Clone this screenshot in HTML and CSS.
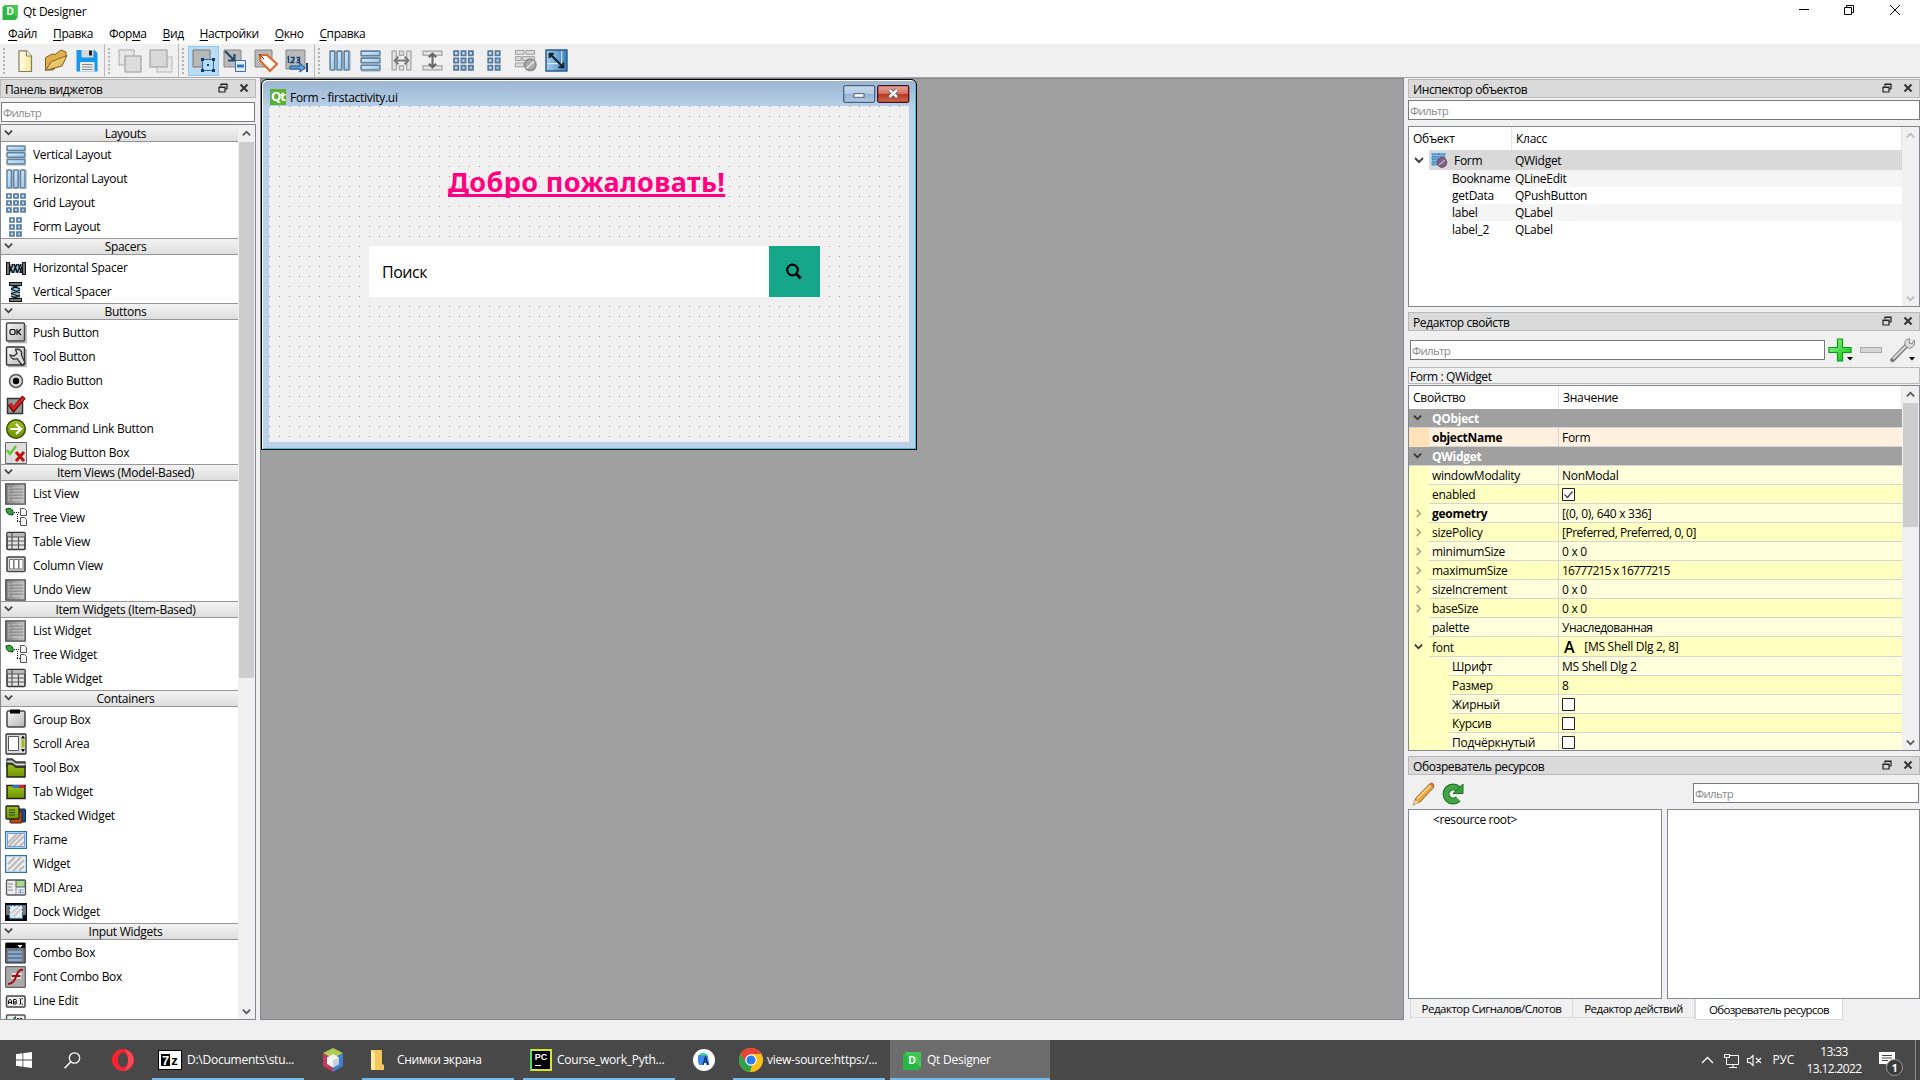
FILE: index.html
```html
<!DOCTYPE html>
<html lang="ru">
<head>
<meta charset="utf-8">
<title>Qt Designer</title>
<link rel="stylesheet" href="styles.css">
</head>
<body>
<svg class="defs" aria-hidden="true">
  <defs>
    <linearGradient id="blue" x1="0" y1="0" x2="1" y2="1"><stop offset="0" stop-color="#dcf0ff"/><stop offset="1" stop-color="#8fc4ea"/></linearGradient>
    <linearGradient id="grey" x1="0" y1="0" x2="1" y2="1"><stop offset="0" stop-color="#fafafa"/><stop offset="1" stop-color="#b4b4b4"/></linearGradient>
    <linearGradient id="dgrey" x1="0" y1="0" x2="1" y2="0"><stop offset="0" stop-color="#858585"/><stop offset="1" stop-color="#c4c4c4"/></linearGradient>
    <linearGradient id="olive" x1="0" y1="0" x2="0" y2="1"><stop offset="0" stop-color="#9dbf22"/><stop offset="1" stop-color="#6f9400"/></linearGradient>
    <linearGradient id="gold" x1="0" y1="0" x2="1" y2="1"><stop offset="0" stop-color="#ffe9a0"/><stop offset="1" stop-color="#d9a53a"/></linearGradient>
    <linearGradient id="green" x1="0" y1="0" x2="1" y2="1"><stop offset="0" stop-color="#9af59a"/><stop offset="1" stop-color="#00c400"/></linearGradient>
    <linearGradient id="navy" x1="0" y1="0" x2="1" y2="0"><stop offset="0" stop-color="#a9d0ee"/><stop offset="1" stop-color="#3d7fb8"/></linearGradient>
    <linearGradient id="gold2" x1="0" y1="0" x2="1" y2="0"><stop offset="0" stop-color="#fffef0"/><stop offset="1" stop-color="#f8e795"/></linearGradient>
  </defs>
  <symbol id="vbox" viewBox="0 0 22 22"><path d="M2 7.700h19M2 14.400h19M2 21.200h19" stroke="#b8bec4"/><g fill="url(#blue)" stroke="#64809c" stroke-width="1.500"><rect x="2" y="2" width="18" height="4.500" rx=".6"/><rect x="2" y="8.700" width="18" height="4.500" rx=".6"/><rect x="2" y="15.500" width="18" height="4.500" rx=".6"/></g></symbol>
  <symbol id="hbox" viewBox="0 0 22 22"><path d="M7.700 2v19M14.400 2v19M21.200 2v19" stroke="#b8bec4"/><g fill="url(#blue)" stroke="#64809c" stroke-width="1.500"><rect x="2" y="2" width="4.500" height="18" rx=".6"/><rect x="8.700" y="2" width="4.500" height="18" rx=".6"/><rect x="15.500" y="2" width="4.500" height="18" rx=".6"/></g></symbol>
  <symbol id="grid" viewBox="0 0 22 22"><g fill="url(#blue)" stroke="#56789a" stroke-width="1.700"><path d="M2 2h4v4H2zM9 2h4v4H9zM16 2h4v4h-4zM2 9h4v4H2zM9 9h4v4H9zM16 9h4v4h-4zM2 16h4v4H2zM9 16h4v4H9zM16 16h4v4h-4z"/></g></symbol>
  <symbol id="form" viewBox="0 0 22 22"><g fill="url(#blue)" stroke="#56789a" stroke-width="1.700"><path d="M5 2h4v4H5zM12 2h4v4h-4zM5 9h4v4H5zM12 9h4v4h-4zM5 16h4v4H5zM12 16h4v4h-4z"/></g></symbol>
  <symbol id="hspacer" viewBox="0 0 22 22"><path d="M4 7h14v9H4z" fill="#8fb3c8"/><path d="M4 16l4-9M8 16l4-9M12 16l4-9M15 16l3-9M4 8l4 8M9 7l3 8M13 7l4 9" stroke="#111" stroke-width="1.300"/><g fill="#777" stroke="#111"><rect x="1.500" y="5.500" width="3" height="12"/><rect x="17.500" y="5.500" width="3" height="12"/></g></symbol>
  <symbol id="vspacer" viewBox="0 0 22 22"><path d="M6 4h9v14H6z" fill="#8fc0d8"/><path d="M6 4l9 4M6 8l9 4M6 12l9 4M6 15l9 3M14 4l-8 4M15 9l-9 4M15 14l-8 4" stroke="#111" stroke-width="1.300"/><g fill="#777" stroke="#111"><rect x="4.500" y="1.500" width="12" height="3"/><rect x="4.500" y="17.500" width="12" height="3"/></g></symbol>
  <symbol id="push" viewBox="0 0 22 22"><path d="M3 20.500h18V3" fill="none" stroke="#aaa" stroke-width="1.500"/><rect x="1.500" y="1" width="18" height="18" rx="1" fill="url(#grey)" stroke="#444" stroke-width="1.400"/><path d="M6 7.500h3l1 1v3l-1 1H6l-1-1v-3zM12 7v6M16 7l-3 3 3 3" fill="none" stroke="#111" stroke-width="1.200"/></symbol>
  <symbol id="tool" viewBox="0 0 22 22"><path d="M3 20.500h18V3" fill="none" stroke="#aaa" stroke-width="1.500"/><rect x="1.500" y="1" width="18" height="18" rx="1" fill="url(#grey)" stroke="#333" stroke-width="1.400"/><path d="M10.500 3.500c4-1 7 1 6 5.500l3.500 8-3 2-5-6.500c-3 1.500-6.500 0-7-3.500l4 1 3-2.500z" fill="#ddd" stroke="#333" stroke-width="1.300"/></symbol>
  <symbol id="radio" viewBox="0 0 22 22"><circle cx="11" cy="11" r="6.500" fill="#d8d8d8" stroke="#555" stroke-width="1.500"/><circle cx="11" cy="11" r="3.200" fill="#000"/></symbol>
  <symbol id="check" viewBox="0 0 22 22"><rect x="2.500" y="4.500" width="15" height="15" fill="#999" stroke="#333" stroke-width="1.500"/><path d="M4.500 10l4 5.500L19 3" fill="none" stroke="#5a0d0d" stroke-width="4.500"/><path d="M5 10l3.500 4.500L18.500 4" fill="none" stroke="#df2020" stroke-width="2.800"/></symbol>
  <symbol id="cmd" viewBox="0 0 22 22"><circle cx="11" cy="11" r="9.300" fill="url(#olive)" stroke="#394e08" stroke-width="1.500"/><path d="M5.500 11H15M11 6l5 5-5 5" fill="none" stroke="#fff" stroke-width="2.200"/></symbol>
  <symbol id="dlg" viewBox="0 0 22 22"><path d="M.5.5h21v21H.5z" fill="#ddd" stroke="#666"/><path d="M2 8l3 4 6-8" fill="none" stroke="#65c433" stroke-width="2.400"/><path d="M11 10l8 9M19 10l-8 9" stroke="#bd1111" stroke-width="3"/></symbol>
  <symbol id="list" viewBox="0 0 22 22"><path d="M.8.8h19.400v20.400H.8z" fill="url(#dgrey)" stroke="#4c4c4c" stroke-width="1.300"/><path d="M3 5h2M3 8h2M3 11h2M3 14h2M3 17h2M7 5h11M7 8h11M7 11h11M7 14h11M7 17h11" stroke="#d4d4d4" stroke-width=".9"/><path d="M7 6h11M7 9h11M7 12h11M7 15h11" stroke="#777" stroke-width=".8"/></symbol>
  <symbol id="tree" viewBox="0 0 22 22"><path d="M1 2c4-2 8 0 7 6C3 8 1 6 1 2z" fill="#36a33f" stroke="#123d16"/><path d="M9 5.500h6M12.500 7v8M12 14.500h3" fill="none" stroke="#111" stroke-dasharray="1 1"/><g fill="#f5f5f5" stroke="#555"><path d="M15.500 1.500h4l2 2v5h-6zM15.500 10.500h4l2 2v6h-6z"/></g></symbol>
  <symbol id="table" viewBox="0 0 22 22"><rect x="2" y="1.500" width="18" height="17" rx="1" fill="#e4e4e4" stroke="#333" stroke-width="1.600"/><path d="M2.500 2h17v4h-17z" fill="#bbb"/><path d="M2 6h18M2 10h18M2 14h18M7 2v17M13.500 6v13" stroke="#555" stroke-width="1.200"/></symbol>
  <symbol id="column" viewBox="0 0 22 22"><rect x="2" y="2" width="18" height="14.500" rx="1" fill="#ddd" stroke="#444" stroke-width="1.600"/><path d="M4.500 4.500h4v9.500h-4zM9 4.500h4.500V14H9zM14 4.500h4V14h-4z" fill="#fff" stroke="#777"/></symbol>
  <symbol id="group" viewBox="0 0 22 22"><rect x="2" y="2" width="18" height="16" rx="1.500" fill="url(#grey)" stroke="#444" stroke-width="1.500"/><path d="M5 .5h10v4H5z" fill="#000"/></symbol>
  <symbol id="scroll" viewBox="0 0 22 22"><rect x="1" y="1" width="20" height="20" rx="1" fill="#ddd" stroke="#333" stroke-width="1.300"/><path d="M3.500 3.500h10v14h-10z" fill="#fff" stroke="#555"/><path d="M16.500 6.500h3v8h-3z" fill="#a0c000"/><path d="M16 5.500l2-3 2 3zM16 16l2 3 2-3z"/></symbol>
  <symbol id="toolbox" viewBox="0 0 22 22"><path d="M2 2h5l4 3h9v5H2z" fill="#888" stroke="#333" stroke-width="1.300"/><path d="M2 4.500h5l4 3h9" fill="none" stroke="#ddd"/><path d="M2 7h5l4 3h9v10H2z" fill="url(#olive)" stroke="#222" stroke-width="1.500"/></symbol>
  <symbol id="tabw" viewBox="0 0 22 22"><path d="M2 4.500h18v13H2z" fill="url(#olive)" stroke="#222" stroke-width="1.500"/><path d="M8 4h6v3H8z" fill="#2676d8"/><path d="M14 4h5v3h-5z" fill="#db1c1c"/></symbol>
  <symbol id="stack" viewBox="0 0 22 22"><rect x="9" y="4" width="11.500" height="13" rx="1" fill="#174fae" stroke="#122"/><rect x="5" y="6" width="12" height="12" rx="1" fill="#bd4c13" stroke="#321"/><rect x="1" y="1" width="13" height="13" rx="1" fill="url(#olive)" stroke="#222" stroke-width="1.300"/><path d="M4 5h6M4 7.500h6M4 10h6" stroke="#243"/></symbol>
  <symbol id="frame" viewBox="0 0 22 22"><path d="M.6 2.600h20.800v16.800H.6z" fill="#eee" stroke="#2674c4" stroke-width="1.200"/><path d="M3 14l9-9M3 18L16 5M8 18L19 7M14 18l5-5" stroke="#bbb" stroke-width="2"/><path d="M2.500 4.500h17v13h-17z" fill="none" stroke="#6ea2d8"/></symbol>
  <symbol id="widget" viewBox="0 0 22 22"><path d="M.6 2.600h20.800v16.800H.6z" fill="#eee" stroke="#2674c4" stroke-width="1.200"/><path d="M3 11l7-7M3 17L16 4M8 18L19 7M14 18l5-5" stroke="#bbb" stroke-width="2.300"/></symbol>
  <symbol id="mdi" viewBox="0 0 22 22"><rect x="1.500" y="3" width="19" height="15" rx="1" fill="#eee" stroke="#555" stroke-width="1.300"/><path d="M11 3.500h9V10h-9z" fill="#afda83" stroke="#567"/><path d="M11 10v8M3 7h5M3 10h4M3 13h5" stroke="#888"/><path d="M13 13h6M13 15.500h6M15.500 12v5" stroke="#7eaede"/></symbol>
  <symbol id="dock" viewBox="0 0 22 22"><path d="M0 2h22v18H0z" fill="#000"/><path d="M1 4h20v10H1z" fill="#777"/><path d="M4.500 4.500h13v13h-13z" fill="#eee" stroke="#2674c4" stroke-width="1.300" stroke-dasharray="2.500 1.500"/><path d="M6 13l7-7M8 16l8-8" stroke="#ccc" stroke-width="2"/></symbol>
  <symbol id="combo" viewBox="0 0 22 22"><path d="M.7 1h19.500v20H.7z" fill="#777" stroke="#222"/><path d="M1 1h19v5H1z"/><path d="M12.500 3h5l-2.500 3z" fill="#fff"/><path d="M3 10h14M3 14h14M3 18h14" stroke="#74acef" stroke-width="2"/></symbol>
  <symbol id="fontcombo" viewBox="0 0 22 22"><path d="M.7.700h19.600v20.600H.7z" fill="#aaa" stroke="#444"/><path d="M7 8h10M6 12h10" stroke="#ddd" stroke-width="2"/><path d="M18 4c-8-2-5 14-15 14M7 10h8" fill="none" stroke="#a40d12" stroke-width="2"/></symbol>
  <symbol id="lineedit" viewBox="0 0 22 22"><rect x="1.500" y="6" width="18.500" height="11" rx="1" fill="#eee" stroke="#444" stroke-width="1.500"/><path d="M3.500 14v-3l1-1.500h1l1 1.500v3M3.500 12.500h3M8.500 14V9.500H11l.5 1-.5 1.500h-2.500M11 12l.5 1-.5 1H8.500M14.500 8.500l1 .5v5l-1 .5M18 8.500L16.500 9M18 14.500l-1.500-.5" fill="none" stroke="#111"/></symbol>
  <symbol id="textedit" viewBox="0 0 22 22"><rect x="1.500" y="1" width="18.500" height="18" rx="1" fill="#eee" stroke="#555" stroke-width="1.500"/><path d="M8 6l2-2v3" fill="none" stroke="#2a7d32" stroke-width="2"/><path d="M12 5h6" stroke="#111" stroke-width="2" stroke-dasharray="2 1"/></symbol>

  <symbol id="new" viewBox="0 0 24 24"><path d="M6 1.800h7.500l5 5.200v15.500H6z" fill="url(#gold2)" stroke="#8a7c50" stroke-width="1.200"/><path d="M13.500 1.800V7h5" fill="#fff" stroke="#8a7c50"/></symbol>
  <symbol id="open" viewBox="0 0 24 24"><path d="M1.500 21V8.500L8 5l3 .5 6-4.500 5 2v5L9 21z" fill="#e0b04a" stroke="#806020"/><path d="M1.500 21.500l6-9L23 6.500l-5 10.500z" fill="url(#gold)" stroke="#806020"/></symbol>
  <symbol id="save" viewBox="0 0 24 24"><path d="M1.500 1h18L22.500 4v18.500h-21z" fill="#1497ef"/><path d="M6.500 1h12v7.500h-12z" fill="#d9d9d9"/><path d="M14 1.500h3v5h-3z" fill="#222"/><path d="M5 13h14.500v9.500H5z" fill="#ececec"/><path d="M7 15.500h10.500M7 18h10.500M7 20.500h10.500" stroke="#888"/></symbol>
  <symbol id="back" viewBox="0 0 24 24"><rect x="1" y="1" width="15" height="15" fill="#e7e7e7" stroke="#aaa"/><rect x="7" y="7" width="16" height="16" fill="#ddd" stroke="#aaa" stroke-width="1.300"/></symbol>
  <symbol id="front" viewBox="0 0 24 24"><rect x="8" y="8" width="15" height="15" fill="#e7e7e7" stroke="#bbb"/><rect x="1" y="1" width="17" height="17" fill="#d8d8d8" stroke="#aaa" stroke-width="1.300"/></symbol>
  <symbol id="editw" viewBox="0 0 24 24"><path d="M1 1h17v17H1z" fill="#b9b9b9" stroke="#777"/><path d="M10.500 10.500h11v11h-11z" fill="#b8daff" stroke="#1b64b4"/><path d="M9 9h3v3H9zM20 9h3v3h-3zM9 20h3v3H9zM20 20h3v3h-3zM15 15h2v2h-2z" fill="#143a66"/></symbol>
  <symbol id="edits" viewBox="0 0 24 24"><path d="M1 1h17v17H1z" fill="#b9b9b9" stroke="#888"/><path d="M2 2l9 9M11.500 5v6.500H5" fill="none" stroke="#234a66" stroke-width="2.200"/><path d="M12.500 11.500h10v11h-10z" fill="#e4efff" stroke="#3c6fae"/><path d="M14 17h7" stroke="#3372be" stroke-width="3"/></symbol>
  <symbol id="editb" viewBox="0 0 24 24"><path d="M1 1h17v17H1z" fill="#b9b9b9" stroke="#888"/><path d="M6 6h7L23 15l-7 7L6.500 12z" fill="#fff" stroke="#dd6724" stroke-width="2.200"/><path d="M5 5l5 5" stroke="#333"/></symbol>
  <symbol id="editt" viewBox="0 0 24 24"><path d="M1 1h19v19H1z" fill="#bababa" stroke="#888"/><path d="M2.500 9l1-1v6M6 8.500h3v2L6 13.500h3.500M11.500 8.500h3v5h-3M12 11h2.500" fill="none" stroke="#173f70" stroke-width="1.400"/><path d="M5 17h10v-3l5 5-5 4v-3H5z" fill="#58a4e8" stroke="#174d82"/><path d="M22 14v9" stroke="#174d82" stroke-width="2"/></symbol>
  <symbol id="hsplit" viewBox="0 0 22 22"><g fill="#e4e4e4" stroke="#aaa" stroke-width="1.300"><rect x="2" y="2" width="4" height="18"/><rect x="16" y="2" width="4" height="18"/><path d="M9 2h4v4H9zM9 16h4v4H9z"/></g><path d="M5 11h12M8 7.500L4.500 11 8 14.500M14 7.500l3.500 3.500-3.500 3.500" fill="none" stroke="#777" stroke-width="2"/></symbol>
  <symbol id="vsplit" viewBox="0 0 22 22"><g fill="#e4e4e4" stroke="#aaa" stroke-width="1.300"><rect x="2" y="2" width="18" height="4"/><rect x="2" y="16" width="18" height="4"/></g><path d="M11 5v12M7.500 8L11 4.500 14.500 8M7.500 14l3.500 3.500 3.500-3.500" fill="none" stroke="#666" stroke-width="2"/></symbol>
  <symbol id="break" viewBox="0 0 24 24"><path d="M1.500 1.500h9v4h-9zM12.500 1.500h9v4h-9zM1.500 8h6v4h-6zM9 8h12.500v4H9zM1.500 14.500h9v4h-9z" fill="#ddd" stroke="#999"/><circle cx="17" cy="16.500" r="6" fill="#aaa" stroke="#888" stroke-width="1.500"/><path d="M13 20l8-7" stroke="#ddd" stroke-width="2"/></symbol>
  <symbol id="adjust" viewBox="0 0 22 22"><path d="M1 1h20v20H1z" fill="url(#navy)" stroke="#25598e" stroke-width="1.400"/><path d="M2 14h14V2" fill="none" stroke="#d6ecfa"/><path d="M5 5l12 12M4.500 8.500v-4h4M17.500 13v4.500H13" fill="none" stroke="#14242e" stroke-width="2"/></symbol>
  <symbol id="broken" viewBox="0 0 17 17"><path d="M1 1h6.500v3H1zM8.500 1H14v3H8.500zM1 5.500h4v3H1zM6 5.500h8v3H6zM1 10h6v4H1z" fill="#5caee9" stroke="#3b7fb5" stroke-width=".8"/><circle cx="11" cy="11.500" r="4.800" fill="#7b6286" stroke="#803a52"/><path d="M8 14l6-5" stroke="#dcdcf2"/></symbol>

  <symbol id="down" viewBox="0 0 10 10"><path d="M1 3l4 4 4-4" fill="none" stroke="currentColor" stroke-width="2"/></symbol>
  <symbol id="up" viewBox="0 0 10 10"><path d="M1 7l4-4 4 4" fill="none" stroke="currentColor" stroke-width="2"/></symbol>
  <symbol id="right" viewBox="0 0 10 10"><path d="M3 1l4 4-4 4" fill="none" stroke="currentColor" stroke-width="1.800"/></symbol>
  <symbol id="float" viewBox="0 0 10 10"><path d="M3 3V1h6v5H7M3 1.500h6" fill="none" stroke="#222" stroke-width="1.200"/><path d="M1 4h6v5H1zM1 4.500h6" fill="none" stroke="#222" stroke-width="1.200"/></symbol>
  <symbol id="close" viewBox="0 0 10 10"><path d="M1.500 1.500l7 7M8.500 1.500l-7 7" stroke="#333" stroke-width="2"/></symbol>
  <symbol id="qtd" viewBox="0 0 20 20"><path d="M3 0h17v17l-3 3H0V3z" fill="#2bb544"/><path d="M3 0h17v17L3 3z" fill="#41c853"/></symbol>
</svg>

<div class="titlebar">
  <span class="qtlogo"><svg preserveAspectRatio="none"><use href="#qtd"/></svg><b>D</b></span>
  <span class="apptitle">Qt Designer</span>
  <svg class="winctl" width="102" height="12" viewBox="0 0 102 12"><g fill="none" stroke="#000"><path d="M0 5.500h10M45.500 3.500h7v7h-7zM47.500 3.500v-2h7v7h-2M91 1l10 10M101 1L91 11"/></g></svg>
</div>
<div class="menubar"><span><u>Ф</u>айл</span><span><u>П</u>равка</span><span>Фор<u>м</u>а</span><span><u>В</u>ид</span><span><u>Н</u>астройки</span><span><u>О</u>кно</span><span><u>С</u>правка</span></div>
<div class="toolbar">
  <div class="tgroup g1"><i class="handle"></i><span class="tb"><svg><use href="#new"/></svg></span><span class="tb"><svg><use href="#open"/></svg></span><span class="tb"><svg><use href="#save"/></svg></span></div>
  <div class="tgroup g2"><i class="handle"></i><span class="tb"><svg><use href="#back"/></svg></span><span class="tb"><svg><use href="#front"/></svg></span></div>
  <div class="tgroup g3"><i class="handle"></i><span class="tb on"><svg><use href="#editw"/></svg></span><span class="tb"><svg><use href="#edits"/></svg></span><span class="tb"><svg><use href="#editb"/></svg></span><span class="tb"><svg><use href="#editt"/></svg></span></div>
  <div class="tgroup g4"><i class="handle"></i><span class="tb"><svg><use href="#hbox"/></svg></span><span class="tb"><svg><use href="#vbox"/></svg></span><span class="tb"><svg><use href="#hsplit"/></svg></span><span class="tb"><svg><use href="#vsplit"/></svg></span><span class="tb"><svg><use href="#grid"/></svg></span><span class="tb"><svg><use href="#form"/></svg></span><span class="tb"><svg><use href="#break"/></svg></span><span class="tb"><svg><use href="#adjust"/></svg></span></div>
</div>

<main class="work">
  <aside class="left">
    <div class="docktitle"><span>Панель виджетов</span><svg><use href="#float"/></svg><svg><use href="#close"/></svg></div>
    <div class="filter">Фильтр</div>
    <div class="wbox">
      <div class="wlist">
        <h3><svg><use href="#down"/></svg>Layouts</h3>
        <p><svg><use href="#vbox"/></svg>Vertical Layout</p>
        <p><svg><use href="#hbox"/></svg>Horizontal Layout</p>
        <p><svg><use href="#grid"/></svg>Grid Layout</p>
        <p><svg><use href="#form"/></svg>Form Layout</p>
        <h3><svg><use href="#down"/></svg>Spacers</h3>
        <p><svg><use href="#hspacer"/></svg>Horizontal Spacer</p>
        <p><svg><use href="#vspacer"/></svg>Vertical Spacer</p>
        <h3><svg><use href="#down"/></svg>Buttons</h3>
        <p><svg><use href="#push"/></svg>Push Button</p>
        <p><svg><use href="#tool"/></svg>Tool Button</p>
        <p><svg><use href="#radio"/></svg>Radio Button</p>
        <p><svg><use href="#check"/></svg>Check Box</p>
        <p><svg><use href="#cmd"/></svg>Command Link Button</p>
        <p><svg><use href="#dlg"/></svg>Dialog Button Box</p>
        <h3><svg><use href="#down"/></svg>Item Views (Model-Based)</h3>
        <p><svg><use href="#list"/></svg>List View</p>
        <p><svg><use href="#tree"/></svg>Tree View</p>
        <p><svg><use href="#table"/></svg>Table View</p>
        <p><svg><use href="#column"/></svg>Column View</p>
        <p><svg><use href="#list"/></svg>Undo View</p>
        <h3><svg><use href="#down"/></svg>Item Widgets (Item-Based)</h3>
        <p><svg><use href="#list"/></svg>List Widget</p>
        <p><svg><use href="#tree"/></svg>Tree Widget</p>
        <p><svg><use href="#table"/></svg>Table Widget</p>
        <h3><svg><use href="#down"/></svg>Containers</h3>
        <p><svg><use href="#group"/></svg>Group Box</p>
        <p><svg><use href="#scroll"/></svg>Scroll Area</p>
        <p><svg><use href="#toolbox"/></svg>Tool Box</p>
        <p><svg><use href="#tabw"/></svg>Tab Widget</p>
        <p><svg><use href="#stack"/></svg>Stacked Widget</p>
        <p><svg><use href="#frame"/></svg>Frame</p>
        <p><svg><use href="#widget"/></svg>Widget</p>
        <p><svg><use href="#mdi"/></svg>MDI Area</p>
        <p><svg><use href="#dock"/></svg>Dock Widget</p>
        <h3><svg><use href="#down"/></svg>Input Widgets</h3>
        <p><svg><use href="#combo"/></svg>Combo Box</p>
        <p><svg><use href="#fontcombo"/></svg>Font Combo Box</p>
        <p><svg><use href="#lineedit"/></svg>Line Edit</p>
        <p><svg><use href="#textedit"/></svg></p>
      </div>
      <div class="sbar"><svg><use href="#up"/></svg><i class="thumb t1"></i><svg class="end"><use href="#down"/></svg></div>
    </div>
  </aside>

  <section class="mdi">
    <div class="win">
      <div class="wintitle">
        <b class="qt">Qt</b><span>Form - firstactivity.ui</span>
        <svg width="67" height="18" viewBox="0 0 67 18">
          <defs><linearGradient id="bm" x1="0" y1="0" x2="0" y2="1"><stop offset="0" stop-color="#c7daed"/><stop offset=".48" stop-color="#b4cbe4"/><stop offset=".5" stop-color="#93b2d2"/><stop offset="1" stop-color="#b3cce6"/></linearGradient>
          <linearGradient id="bc" x1="0" y1="0" x2="0" y2="1"><stop offset="0" stop-color="#e8a598"/><stop offset=".48" stop-color="#d6705f"/><stop offset=".5" stop-color="#b93520"/><stop offset="1" stop-color="#cf6c50"/></linearGradient></defs>
          <rect x=".7" y=".7" width="31" height="16.600" rx="1.500" fill="url(#bm)" stroke="#4a6380" stroke-width="1.300"/><rect x="11" y="8.700" width="10" height="3.600" fill="#fff" stroke="#555e6e"/>
          <rect x="34.700" y=".7" width="31" height="16.600" rx="1.500" fill="url(#bc)" stroke="#48101c" stroke-width="1.300"/><path d="M46.500 5l7.500 7M54 5l-7.500 7" stroke="#515667" stroke-width="4.200"/><path d="M46.500 5l7.500 7M54 5l-7.500 7" stroke="#fff" stroke-width="2.400"/>
        </svg>
      </div>
      <div class="canvas">
        <div class="welcome">Добро пожаловать!</div>
        <div class="search"><span>Поиск</span><b><svg width="18" height="18" viewBox="0 0 18 18"><circle cx="7.500" cy="7" r="5.300" fill="none" stroke="#000" stroke-width="2.200"/><path d="M11.200 10.800l4.500 4.700" stroke="#000" stroke-width="2.800"/></svg></b></div>
      </div>
    </div>
  </section>

  <aside class="right">
    <div class="docktitle"><span>Инспектор объектов</span><svg><use href="#float"/></svg><svg><use href="#close"/></svg></div>
    <div class="filter f2">Фильтр</div>
    <div class="inspector">
      <div class="tree">
        <div class="hdr"><span>Объект</span><span>Класс</span></div>
        <div class="orow root"><svg class="exp"><use href="#down"/></svg><span><svg><use href="#broken"/></svg>Form</span><em>QWidget</em></div>
        <div class="orow alt"><span>Bookname</span><em>QLineEdit</em></div>
        <div class="orow"><span>getData</span><em>QPushButton</em></div>
        <div class="orow alt"><span>label</span><em>QLabel</em></div>
        <div class="orow"><span>label_2</span><em>QLabel</em></div>
      </div>
      <div class="sbar off"><svg><use href="#up"/></svg><svg class="end"><use href="#down"/></svg></div>
    </div>

    <div class="docktitle d2"><span>Редактор свойств</span><svg><use href="#float"/></svg><svg><use href="#close"/></svg></div>
    <div class="ptools">
      <div class="filter">Фильтр</div>
      <svg width="92" height="26" viewBox="0 0 92 26"><path d="M9.500 2h5v8.500H23v5h-8.500V24h-5v-8.500H1v-5h8.500z" fill="url(#green)" stroke="#0c9a16" stroke-width="1.200"/><path d="M19 20h6l-3 3.500z"/><rect x="32.500" y="10.500" width="21" height="5" fill="#d6d6d8" stroke="#aaa"/><path d="M64.500 23L80 7" stroke="#777" stroke-width="4.500" stroke-linecap="round"/><path d="M65 22L79 8" stroke="#ddd" stroke-width="2"/><path d="M77 8c-1-4 2-7 5-6l-1 4 3 1 2-4c2 5-2 9-6 8z" fill="#ddd" stroke="#888"/><path d="M81 20h6l-3 3.500z"/></svg>
    </div>
    <div class="objlabel">Form : QWidget</div>
    <div class="props">
      <div class="ptable">
        <div class="hdr"><span>Свойство</span><span>Значение</span></div>
        <div class="sec"><svg><use href="#down"/></svg>QObject</div>
        <div class="prow orange bold"><i></i><span>objectName</span><em>Form</em></div>
        <div class="sec"><svg><use href="#down"/></svg>QWidget</div>
        <div class="prow"><i></i><span>windowModality</span><em>NonModal</em></div>
        <div class="prow alt"><i></i><span>enabled</span><em><svg class="cb" viewBox="0 0 13 13"><path d="M.5.5h12v12H.5z" fill="#fff" stroke="#222"/><path d="M2.500 6.500l3 3 5-6" fill="none" stroke="#444" stroke-width="1.300"/></svg></em></div>
        <div class="prow bold"><i><svg><use href="#right"/></svg></i><span>geometry</span><em>[(0, 0), 640 x 336]</em></div>
        <div class="prow alt"><i><svg><use href="#right"/></svg></i><span>sizePolicy</span><em class="tight">[Preferred, Preferred, 0, 0]</em></div>
        <div class="prow"><i><svg><use href="#right"/></svg></i><span>minimumSize</span><em>0 x 0</em></div>
        <div class="prow alt"><i><svg><use href="#right"/></svg></i><span>maximumSize</span><em class="tighter">16777215 x 16777215</em></div>
        <div class="prow"><i><svg><use href="#right"/></svg></i><span>sizeIncrement</span><em>0 x 0</em></div>
        <div class="prow alt"><i><svg><use href="#right"/></svg></i><span>baseSize</span><em>0 x 0</em></div>
        <div class="prow"><i></i><span>palette</span><em class="tight">Унаследованная</em></div>
        <div class="prow alt font"><i class="dark"><svg><use href="#down"/></svg></i><span>font</span><em><b>A</b>[MS Shell Dlg 2, 8]</em></div>
        <div class="prow sub"><i></i><span>Шрифт</span><em>MS Shell Dlg 2</em></div>
        <div class="prow alt sub"><i></i><span>Размер</span><em>8</em></div>
        <div class="prow sub"><i></i><span>Жирный</span><em><svg class="cb" viewBox="0 0 13 13"><path d="M.5.5h12v12H.5z" fill="#fff" stroke="#222"/></svg></em></div>
        <div class="prow alt sub"><i></i><span>Курсив</span><em><svg class="cb" viewBox="0 0 13 13"><path d="M.5.5h12v12H.5z" fill="#fff" stroke="#222"/></svg></em></div>
        <div class="prow sub"><i></i><span>Подчёркнутый</span><em><svg class="cb" viewBox="0 0 13 13"><path d="M.5.5h12v12H.5z" fill="#fff" stroke="#222"/></svg></em></div>
      </div>
      <div class="sbar"><svg><use href="#up"/></svg><i class="thumb t2"></i><svg class="end"><use href="#down"/></svg></div>
    </div>

    <div class="docktitle d3"><span>Обозреватель ресурсов</span><svg><use href="#float"/></svg><svg><use href="#close"/></svg></div>
    <div class="rtools">
      <svg width="54" height="24" viewBox="0 0 54 24"><path d="M1 23l3-7L18 1.500l4 3.500L8 20z" fill="#eda63c" stroke="#8b6231"/><path d="M5 17L18.500 3.500" stroke="#ffd98a" stroke-width="1.500"/><path d="M18 1.500l2-1.200L22.500 3 22 5z" fill="#d7604c"/><path d="M1 23l2-5 4 3z" fill="#e8d2a4"/><path d="M46 17a7 7 0 1 1 0-10" fill="none" stroke="#14721c" stroke-width="7"/><path d="M46 17a7 7 0 1 1 0-10" fill="none" stroke="#43a548" stroke-width="5"/><path d="M51 2v9.500H41z" fill="#3da045" stroke="#14721c"/></svg>
      <div class="filter">Фильтр</div>
    </div>
    <div class="rboxes"><div>&lt;resource root&gt;</div><div></div></div>
    <div class="tabs"><span>Редактор Сигналов/Слотов</span><span>Редактор действий</span><span class="sel">Обозреватель ресурсов</span></div>
  </aside>
</main>

<footer class="taskbar">
  <span class="ti w48"><svg width="16" height="16" viewBox="0 0 16 16"><path d="M0 2.200L6.500 1.300V7.600H0zM7.300 1.200L16 0v7.600H7.300zM0 8.400h6.500v6.300L0 13.800zM7.300 8.400H16V16l-8.700-1.200z" fill="#fff"/></svg></span>
  <span class="ti w48"><svg width="17" height="17" viewBox="0 0 17 17"><circle cx="10.500" cy="6" r="5.200" fill="none" stroke="#fff" stroke-width="1.300"/><path d="M6.800 9.800L.6 16.300" stroke="#fff" stroke-width="1.400"/></svg></span>
  <span class="ti w54"><svg width="24" height="24" viewBox="0 0 24 24"><path fill-rule="evenodd" d="M12 1a11 11 0 1 0 0 22 11 11 0 0 0 0-22zM12 4.500c3 0 5 3.400 5 7.500s-2 7.500-5 7.500S7 16.100 7 12s2-7.500 5-7.500z" fill="#fb2230"/><path d="M12 1c14 2 14 20 0 22 3-1 5-4 5-11S15 2 12 1z" fill="#fff" opacity=".18"/></svg></span>
  <span class="tk tk1"><b class="seven"><i>7</i><i>z</i></b>D:\Documents\stu...</span>
  <span class="ti w58"><svg width="22" height="26" viewBox="0 0 22 26"><path d="M11 1l10 5-10 6L1 6z" fill="#b2cb54"/><path d="M1 6l10 6v13L1 19z" fill="#c33a5c"/><path d="M21 6l-10 6v13l10-6z" fill="#3e82d2"/><path d="M11 7l6 3.500V17l-6 3.500L5 17v-6.500z" fill="#f2f5f7"/><path d="M11 13.500l6-3V17l-6 3.500z" fill="#cbd2d9"/></svg></span>
  <span class="tk tk2"><svg width="16" height="22" viewBox="0 0 16 22"><path d="M1 1h11v14l2 1v5H1z" fill="#f2c75c"/><path d="M1 1l4 2v18l-4-1z" fill="#ffe8a0"/></svg>Снимки экрана</span>
  <span class="tk tk3"><b class="pc">PC</b>Course_work_Pyth...</span>
  <span class="ti w58"><svg width="22" height="22" viewBox="0 0 22 22"><circle cx="11" cy="11" r="11" fill="#fff"/><path d="M5.500 6h9l2 10h-3l-2-6-1.500 6h-4z" fill="#4285f4"/><path d="M5 6.500h10V14H5z" fill="#4285f4"/><path d="M6 6c2-3 7-3 9 1z" fill="#3ddc84"/><path d="M10 16l2.500-8 2.500 8M11 13h3.500" fill="none" stroke="#07305f" stroke-width="1.200"/></svg></span>
  <span class="tk tk4"><svg width="24" height="24" viewBox="0 0 24 24"><circle cx="12" cy="12" r="12" fill="#fbc116"/><path d="M1.600 6A12 12 0 0 1 22.400 6H12l-5 9z" fill="#ea4335"/><path d="M1.600 6l6 9.500 5.400 2L11 24A12 12 0 0 1 1.600 6z" fill="#2ba24c"/><circle cx="12" cy="12" r="5.800" fill="#fff"/><circle cx="12" cy="12" r="4.600" fill="#2c7df0"/></svg>view-source:https:/...</span>
  <span class="tk tk5"><span class="qtlogo big"><svg><use href="#qtd"/></svg><b>D</b></span>Qt Designer</span>
  <span class="tray">
    <svg width="62" height="18" viewBox="0 0 62 18"><path d="M1 12l5.500-5.500L12 12" fill="none" stroke="#fff" stroke-width="1.300"/><path d="M29 4.500h8.500v9H27M23.500 3.500h5v3h-5zM25.500 7v6.500H28M32 14v2.500M28 16.500h8" fill="none" stroke="#fff"/><path d="M46.500 7.500h2.500l3-3v10l-3-3h-2.500zM55 7l5 5M60 7l-5 5" fill="none" stroke="#fff" stroke-width="1.100"/></svg>
    <span class="lang">РУС</span>
    <span class="clock">13:33<br>13.12.2022</span>
    <span class="notif"><svg width="16" height="16" viewBox="0 0 16 16"><path d="M0 0h16v12h-5v4l-4-4H0z" fill="#fff"/><path d="M3 3.500h10M3 6h10M3 8.500h6" stroke="#444"/></svg><b>1</b></span>
    <i class="peek"></i>
  </span>
</footer>
</body>
</html>
```
FILE: styles.css
```css
* { box-sizing: border-box; }
body { margin: 0; width: 1920px; height: 1080px; overflow: hidden; display: flex; flex-direction: column; background: #f0f0f0; color: #000; font: 12px/16px "Open Sans", "Noto Sans", sans-serif; letter-spacing: -0.28px; white-space: nowrap; }
h3, p { margin: 0; font-size: inherit; font-weight: 400; }
em, i { font-style: normal; }
svg { flex: none; display: block; }
.defs { position: absolute; width: 0; height: 0; }

.titlebar { height: 24px; background: #fff; display: flex; align-items: center; padding: 0 19px 0 2px; flex: none; }
.qtlogo { width: 16px; height: 15px; display: grid; place-items: center; }
.qtlogo svg, .qtlogo b { grid-area: 1 / 1; }
.qtlogo svg { width: 16px; height: 15px; }
.qtlogo b { font: bold 10px/14px "Liberation Sans", sans-serif; color: #fff; z-index: 1; letter-spacing: 0; }
.apptitle { margin-left: 5px; flex: 1; }
.winctl { margin-top: -4px; }
.menubar { height: 20px; background: #fff; display: flex; gap: 16px; padding: 2px 8px; flex: none; letter-spacing: -.42px; }
.menubar u { text-underline-offset: 2px; }

.toolbar { height: 34px; border-bottom: 1px solid #a8a8a8; display: flex; flex: none; background: #f0f0f0; }
.tgroup { display: flex; align-items: center; border-right: 1px solid #bdbdbd; padding: 1px 0 1px; }
.g1 { width: 105px; } .g2 { width: 74px; } .g3 { width: 136px; } .g4 { border: 0; }
.handle { width: 2px; height: 26px; margin: 0 4px 0 3px; background: repeating-linear-gradient(#b5b5b5 0 2px, transparent 2px 4px); }
.tb { width: 31px; height: 30px; display: grid; place-items: center; }
.tb svg { width: 24px; height: 24px; }
.g4 .tb svg { width: 23px; height: 23px; }
.tb.on { background: #bcdcf4; border: 1px solid #90c8f6; }

.work { height: 942px; flex: none; display: flex; }
.left { width: 256px; display: flex; flex-direction: column; padding-top: 1px; }
.docktitle { height: 19px; flex: none; background: #dadada; border: 1px solid #b9b9b9; display: flex; align-items: center; padding: 0 6px 0 4px; gap: 11px; }
.docktitle span { flex: 1; padding-top: 2px; letter-spacing: -.4px; }
.docktitle svg { width: 10px; height: 10px; margin-top: -1px; }
.filter { height: 20px; border: 1px solid #7a7a7a; background: #fff; color: #8b8b8b; padding: 2px 2px 0 1px; font-size: 11.5px; line-height: 16px; letter-spacing: -.7px; }
.left .filter { margin: 4px 1px 2px 1px; flex: none; }
.wbox { height: 896px; border: 1px solid #828790; display: flex; background: #fff; overflow: hidden; }
.wlist { flex: 1; }
.wlist h3 { height: 17px; line-height: 15px; text-align: center; background: linear-gradient(#f3f3f3, #dedede); border-top: 1px solid #969696; border-bottom: 1px solid #969696; display: flex; align-items: center; justify-content: center; }
.wlist h3:first-child { border-top-color: #eee; }
.wlist h3 svg { width: 9px; height: 9px; margin: -2px auto 0 3px; color: #444; }
.wlist h3::after { content: ""; width: 0; margin-right: auto; }
.wlist p { height: 24px; display: flex; align-items: center; padding: 2px 0 0 4px; gap: 6px; }
.wlist p svg { width: 22px; height: 22px; }
.sbar { width: 17px; background: #f0f0f0; display: flex; flex-direction: column; align-items: center; color: #555; padding: 4px 0 3px; flex: none; }
.sbar svg { width: 9px; height: 9px; }
.sbar .end { margin-top: auto; }
.off { color: #bbb; }
.thumb { width: 15px; background: #cdcdcd; margin-top: 4px; }
.t1 { height: 536px; } .t2 { height: 124px; }

.mdi { width: 1144px; height: 942px; margin-left: 4px; background: #a0a0a0; border: 1px solid #828790; }
.win { width: 656px; height: 371px; border: 1px solid #000; border-radius: 6px 6px 0 0; background: linear-gradient(#9bb4d0, #b9d1ea 28px); box-shadow: inset 1px 1px #fff, inset -1px -1px #37c6e0; padding: 1px 6px 0 7px; }
.wintitle { height: 25px; display: flex; padding-top: 4px; }
.qt { width: 16px; height: 16px; margin: 4px 4px 0 1px; background: #5cb131; color: #fff; font: bold 13px/15px "Open Sans"; letter-spacing: -1px; text-align: center; }
.wintitle span { flex: 1; padding-top: 5px; }
.canvas { width: 640px; height: 336px; display: flex; flex-direction: column; background: radial-gradient(circle at .5px .5px, #9c9c9c .6px, transparent .7px) 0 0 / 10px 10px #f0f0f0; }
.welcome { margin: 57px 0 0 179px; font: bold 27px/37px "Noto Sans"; color: #ff0080; text-decoration: underline; text-decoration-thickness: 3px; text-underline-offset: 2px; text-decoration-skip-ink: none; letter-spacing: .37px; }
.search { width: 451px; height: 51px; margin: 46px 0 0 100px; display: flex; background: #fff; font-size: 16px; align-items: center; letter-spacing: -.45px; }
.search span { flex: 1; padding: 0 0 0 13px; }
.search b { width: 51px; height: 51px; background: #16a689; display: grid; place-items: center; padding-right: 2px; }

.right { width: 512px; margin-left: 4px; display: flex; flex-direction: column; padding-top: 1px; }
.f2 { margin: 2px 0 6px; flex: none; }
.inspector { height: 181px; border: 1px solid #828790; background: #fff; display: flex; flex: none; }
.tree, .ptable { flex: 1; }
.hdr { height: 23px; display: flex; align-items: center; border-right: 1px solid #e5e5e5; }
.hdr span { padding-left: 4px; }
.tree .hdr span:first-child { width: 103px; border-right: 1px solid #e5e5e5; line-height: 23px; }
.orow { height: 17px; display: flex; margin-left: 40px; align-items: center; }
.orow span { width: 66px; padding-left: 3px; display: flex; align-items: center; overflow: hidden; }
.orow.alt { background: #f5f5f5; }
.orow.root { height: 20px; margin: 0; background: linear-gradient(90deg, #fff 20px, #d9d9d9 20px); padding-top: 1px; }
.exp { width: 10px; height: 10px; margin-left: 5px; color: #444; margin-top: -2px; }
.root span { width: 91px; padding-left: 7px; gap: 6px; }
.root span svg { width: 17px; height: 17px; margin-top: -2px; }
.d2 { margin-top: 5px; }
.ptools { display: flex; padding: 9px 0 0 2px; height: 36px; }
.ptools .filter { width: 415px; }
.ptools svg { margin: -3px 0 0 3px; }
.objlabel { height: 17px; border: 1px solid #b9b9b9; line-height: 17px; padding-left: 1px; flex: none; letter-spacing: -.4px; }
.props { margin-top: 1px; height: 366px; border: 1px solid #828790; background: #fff; display: flex; overflow: hidden; flex: none; }
.ptable .hdr span:first-child { width: 150px; border-right: 1px solid #e5e5e5; line-height: 23px; }
.sec { height: 19px; background: #a0a0a0; color: #fff; font-weight: 700; display: flex; align-items: center; gap: 10px; padding: 2px 0 0 4px; border-bottom: 1px solid #d4d4d4; }
.sec svg { width: 9px; height: 9px; color: #333; margin-top: -4px; }
.prow { height: 19px; display: flex; background: #ffffdc; }
.prow.alt { background: #ffffbf; }
.prow i { width: 20px; background: #ffffbf; color: #a5a580; padding: 5px 0 0 5px; }
.prow i svg { width: 9px; height: 9px; }
.prow i.dark { color: #333; }
.prow span { width: 130px; padding-left: 3px; border-right: 1px solid #d4d4d4; border-bottom: 1px solid #d4d4d4; line-height: 18px; padding-top: 1px; }
.prow em { flex: 1; padding-left: 3px; border-bottom: 1px solid #d4d4d4; line-height: 18px; padding-top: 1px; }
.prow em.tight { letter-spacing: -.48px; }
.prow em.tighter { letter-spacing: -.78px; }
.prow.bold span { font-weight: 700; }
.prow.orange { background: #fff0e0; }
.prow.orange i { background: #ffe2b8; }
.prow.sub i { width: 40px; }
.prow.sub span { width: 110px; }
.prow.font { height: 20px; }
.prow.font span { line-height: 19px; }
.font em { display: flex; gap: 10px; align-items: center; padding-left: 5px; }
.font b { font-weight: 600; font-size: 16px; }
.cb { width: 13px; height: 13px; margin-top: 2px; }
.d3 { margin-top: 5px; }
.rtools { height: 34px; flex: none; display: flex; padding: 7px 1px 0 4px; justify-content: space-between; }
.rtools .filter { width: 226px; margin-top: 1px; }
.rboxes { height: 190px; display: flex; gap: 5px; flex: none; }
.rboxes div { width: 254px; height: 190px; border: 1px solid #828790; background: #fff; padding: 2px 0 0 24px; letter-spacing: -.38px; }
.tabs { display: flex; align-items: flex-start; padding-left: 2px; font-size: 11.5px; letter-spacing: -.5px; }
.tabs span { height: 19px; border: 1px solid #d9d9d9; border-top: 0; text-align: center; line-height: 19px; width: 163px; }
.tabs span:nth-child(2) { width: 122px; border-left: 0; }
.tabs .sel { background: #fff; width: 148px; height: 21px; line-height: 22px; letter-spacing: -.65px; }

.taskbar { margin-top: 20px; height: 40px; background: #484848; color: #fff; display: flex; flex: none; letter-spacing: -.25px; }
.ti { display: grid; place-items: center; }
.w48 { width: 48px; } .w54 { width: 54px; } .w58 { width: 58px; }
.tk { display: flex; align-items: center; width: 152px; border-bottom: 2px solid #76b9ed; padding-left: 6px; padding-top: 2px; }
.tk1 { margin-left: 2px; }
.seven { width: 24px; height: 20px; border: 1px solid #000; background: #fff; padding: 3px 2px; display: flex; font: bold 13px/13px "Liberation Sans"; letter-spacing: 0; text-align: center; margin-right: 5px; }
.seven i { flex: 1; color: #000; }
.seven i:first-child { background: #000; color: #fff; }
.tk2 { padding-left: 8px; letter-spacing: -.33px; } .tk2 svg { margin-right: 11px; }
.tk3 { margin-left: 9px; padding-left: 7px; }
.pc { width: 22px; height: 22px; border: 2px solid #d8e330; border-left-color: #4fe05a; background: linear-gradient(#fff, #fff) 3px 14px / 6px 1px no-repeat #000; font: bold 9px/12px "Liberation Sans"; text-align: center; margin-right: 5px; letter-spacing: 0; }
.tk4 svg { margin-right: 4px; }
.tk5 { margin-left: 5px; width: 160px; background: #6c6c6c; padding-left: 12px; }
.qtlogo.big { width: 20px; height: 16px; margin-right: 5px; }
.qtlogo.big svg { width: 18px; height: 18px; }
.tray { margin-left: auto; display: flex; align-items: center; }
.lang { margin-left: 10px; }
.clock { width: 60px; text-align: center; line-height: 17.5px; margin-left: 10px; letter-spacing: -.6px; }
.notif { width: 28px; height: 28px; margin-left: 15px; display: grid; padding-top: 6px; }
.notif svg, .notif b { grid-area: 1 / 1; }
.notif b { width: 17px; height: 17px; margin: 7px 0 0 7px; border: 1px solid #999; border-radius: 50%; background: #3b3b3b; font-size: 11px; line-height: 15px; text-align: center; }
.peek { width: 1px; height: 40px; background: #8a8a8a; margin: 0 4px 0 8px; }
```
